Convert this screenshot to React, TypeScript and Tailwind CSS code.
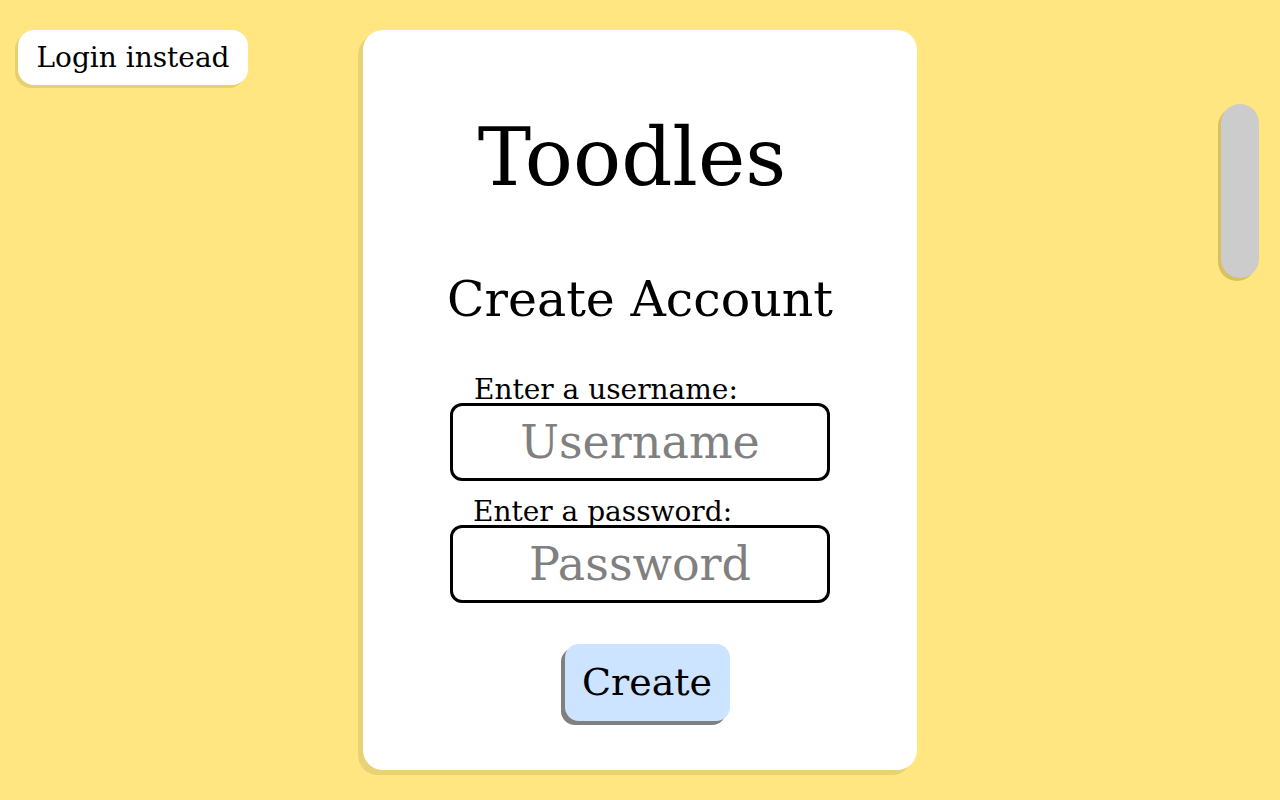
import React from 'react';

const serif = { fontFamily: '"DejaVu Serif", "Liberation Serif", serif' };

const App: React.FC = () => {
  const [username, setUsername] = React.useState('');
  const [password, setPassword] = React.useState('');

  return (
    <div className="min-h-screen bg-[#ffe680] grid grid-cols-[1fr_554px_1fr]" style={serif}>
      <div className="pl-[18px] pt-[30px]">
        <button className="h-[55px] w-[230px] rounded-[16px] bg-white text-[28px] leading-none text-black shadow-[-3px_3px_0_#e8d070]">
          Login instead
        </button>
      </div>

      <div className="pt-[30px]">
        <div className="h-[740px] rounded-[20px] bg-white shadow-[-5px_5px_0_#e8d276] flex flex-col items-center">
          <h1 className="mr-[16px] mt-[88px] text-[80px] leading-none text-black">Toodles</h1>
          <h2 className="mt-[77px] text-[49px] leading-none text-black">Create Account</h2>

          <div className="mt-[52px] w-[380px]">
            <label className="block pl-[24px] text-[28px] leading-none text-black">Enter a username:</label>
            <input
              value={username}
              onChange={(e) => setUsername(e.target.value)}
              placeholder="Username"
              className="-mt-px h-[78px] w-full rounded-[12px] border-[3px] border-black bg-white text-center text-[46px] text-black placeholder:text-[#808080] outline-none"
            />
            <label className="mt-[17px] block pl-[23px] text-[28px] leading-none text-black">Enter a password:</label>
            <input
              type="password"
              value={password}
              onChange={(e) => setPassword(e.target.value)}
              placeholder="Password"
              className="-mt-px h-[78px] w-full rounded-[12px] border-[3px] border-black bg-white text-center text-[46px] text-black placeholder:text-[#808080] outline-none"
            />
          </div>

          <button className="ml-[14px] mt-[41px] h-[77px] w-[165px] rounded-[14px] bg-[#cce4ff] text-[38px] text-black shadow-[-4px_4px_0_#808080]">
            Create
          </button>
        </div>
      </div>

      <div className="flex justify-end pr-[21px] pt-[104px]">
        <div className="h-[174px] w-[38px] rounded-full bg-[#cccccc] shadow-[-3px_3px_0_#d9c060]" />
      </div>
    </div>
  );
};

export default App;
